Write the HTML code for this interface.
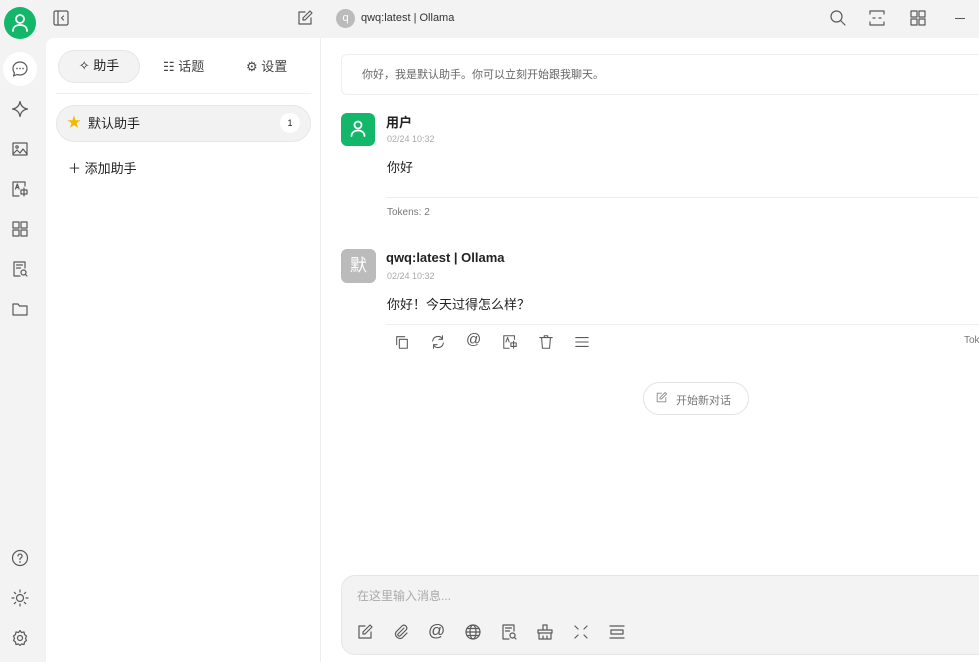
<!DOCTYPE html>
<html><head><meta charset="utf-8"><style>
*{box-sizing:border-box;margin:0;padding:0}
body{width:979px;height:662px;overflow:hidden;background:#f3f3f3;font-family:"Liberation Sans","Noto Sans CJK SC",sans-serif;color:#222;position:relative}
.a{position:absolute}
svg{fill:none;stroke:#5a5a5a;stroke-width:1.2;stroke-linecap:round;stroke-linejoin:round}
.ic{position:absolute;width:18px;height:18px}
</style></head><body>
<!-- left rail -->
<div class="a" style="left:4px;top:7px;width:32px;height:32px;border-radius:50%;background:#12b76a"></div>
<svg class="a" style="left:11px;top:13px;width:18px;height:20px;stroke:#fff;stroke-width:1.8" viewBox="0 0 18 20"><circle cx="9" cy="6" r="4"/><path d="M2 18c0-4 3-6 7-6s7 2 7 6"/></svg>
<div class="a" style="left:3px;top:52px;width:34px;height:34px;border-radius:50%;background:#fff"></div>
<svg class="ic" style="left:11px;top:60px" viewBox="0 0 18 18"><path d="M9 2c4 0 7 3 7 6.5S13 15 9 15c-1 0-2-.2-3-.5L2.5 16l1-3C2.5 11.8 2 10.3 2 8.5 2 5 5 2 9 2z"/><circle cx="6" cy="8.5" r=".3"/><circle cx="9" cy="8.5" r=".3"/><circle cx="12" cy="8.5" r=".3"/></svg>
<svg class="ic" style="left:11px;top:100px" viewBox="0 0 18 18"><path d="M9 1.5c.7 4 2.5 6.8 7.5 7.5-5 .7-6.8 3.5-7.5 7.5C8.3 12.5 6.5 9.7 1.5 9 6.5 8.3 8.3 5.5 9 1.5z"/></svg>
<svg class="ic" style="left:11px;top:140px" viewBox="0 0 18 18"><rect x="2" y="3" width="14" height="12"/><circle cx="6" cy="7" r="1.2"/><path d="M2 14l4-4 3 3 3-4 4 5"/></svg>
<svg class="ic" style="left:11px;top:180px" viewBox="0 0 18 18"><path d="M14 6V2H2v14h6"/><path d="M4.5 9l1.8-5 1.8 5M5 7.5h2.5"/><rect x="10" y="10" width="6" height="4"/><path d="M13 8v8"/></svg>
<svg class="ic" style="left:11px;top:220px" viewBox="0 0 18 18"><rect x="2" y="2" width="6" height="6"/><rect x="10" y="2" width="6" height="6"/><rect x="2" y="10" width="6" height="6"/><rect x="10" y="10" width="6" height="6"/></svg>
<svg class="ic" style="left:11px;top:260px" viewBox="0 0 18 18"><path d="M14 8V2H3v14h6"/><path d="M5.5 5h6M5.5 8h4"/><circle cx="12.5" cy="12.5" r="2.5"/><path d="M14.3 14.3l1.7 1.7"/></svg>
<svg class="ic" style="left:11px;top:300px" viewBox="0 0 18 18"><path d="M2 4h5l1.5 2H16v9H2z"/></svg>
<svg class="ic" style="left:11px;top:549px" viewBox="0 0 18 18"><circle cx="9" cy="9" r="7.5"/><path d="M7 7a2 2 0 1 1 2.5 2c-.5.2-.5.6-.5 1.5"/><circle cx="9" cy="13" r=".3"/></svg>
<svg class="ic" style="left:11px;top:589px" viewBox="0 0 18 18"><circle cx="9" cy="9" r="3.5"/><path d="M9 1v2M9 15v2M1 9h2M15 9h2M3.3 3.3l1.4 1.4M13.3 13.3l1.4 1.4M3.3 14.7l1.4-1.4M13.3 4.7l1.4-1.4"/></svg>
<svg class="ic" style="left:11px;top:629px" viewBox="0 0 18 18"><circle cx="9" cy="9" r="2.5"/><path d="M9 1.5l1.5 2 2.5-.5.5 2.5 2 1.5-1 2.2 1 2.3-2 1.5-.5 2.5-2.5-.5L9 16.5 7.5 15l-2.5.5L4.5 13l-2-1.5 1-2.3-1-2.2 2-1.5L5 3l2.5.5z"/></svg>
<!-- top bar -->
<svg class="ic" style="left:52px;top:9px" viewBox="0 0 18 18"><rect x="2" y="2" width="14" height="14" rx="1.5"/><path d="M6 2v14M11.5 7l-2 2 2 2"/></svg>
<svg class="ic" style="left:296px;top:9px" viewBox="0 0 18 18"><path d="M9 3H3v12h12V9"/><path d="M14 2l2 2-7 7H7V9z"/></svg>
<div class="a" style="left:336px;top:9px;width:19px;height:19px;border-radius:50%;background:#bbb;color:#fff;font-size:11px;text-align:center;line-height:18px">q</div>
<div class="a" style="left:361px;top:12px;font-size:11px;color:#333">qwq:latest | Ollama</div>
<svg class="ic" style="left:829px;top:9px" viewBox="0 0 18 18"><circle cx="7.5" cy="7.5" r="5.5"/><path d="M11.5 11.5l4.5 4.5"/></svg>
<svg class="ic" style="left:868px;top:9px" viewBox="0 0 18 18"><path d="M2 5V2h14v3M2 13v3h14v-3M5 9h2M11 9h2"/></svg>
<svg class="ic" style="left:909px;top:9px" viewBox="0 0 18 18"><rect x="2" y="2" width="6" height="6"/><rect x="10" y="2" width="6" height="6"/><rect x="2" y="10" width="6" height="6"/><rect x="10" y="10" width="6" height="6"/></svg>
<div class="a" style="left:955px;top:18px;width:10px;height:1.3px;background:#555"></div>
<!-- side panel -->
<div class="a" style="left:46px;top:38px;width:275px;height:624px;background:#fff;border-right:1px solid #eee;border-top-left-radius:8px"></div>
<div class="a" style="left:58px;top:50px;width:82px;height:33px;border-radius:17px;background:#f3f3f3;border:1px solid #e6e6e6;font-size:13px;text-align:center;line-height:29px">✧ 助手</div>
<div class="a" style="left:163px;top:56px;font-size:13px;color:#444">☷ 话题</div>
<div class="a" style="left:246px;top:56px;font-size:13px;color:#444">⚙ 设置</div>
<div class="a" style="left:56px;top:93px;width:255px;height:1px;background:#eee"></div>
<div class="a" style="left:56px;top:105px;width:255px;height:37px;border-radius:19px;background:#f2f2f2;border:1px solid #e6e6e6"></div>
<div class="a" style="left:67px;top:112px;font-size:14px;color:#f5b800">★</div>
<div class="a" style="left:88px;top:113px;font-size:13px">默认助手</div>
<div class="a" style="left:280px;top:113px;width:20px;height:20px;border-radius:50%;background:#fff;font-size:9px;text-align:center;line-height:20px">1</div>
<div class="a" style="left:68px;top:158px;font-size:13px">＋ 添加助手</div>
<!-- main -->
<div class="a" style="left:321px;top:38px;width:658px;height:624px;background:#fff"></div>
<div class="a" style="left:341px;top:54px;width:650px;height:41px;border:1px solid #eee;border-radius:6px;font-size:11px;color:#666;padding:11px 0 0 20px">你好，我是默认助手。你可以立刻开始跟我聊天。</div>
<div class="a" style="left:341px;top:113px;width:34px;height:33px;border-radius:6px;background:#12b76a"></div>
<svg class="a" style="left:349px;top:119px;width:18px;height:20px;stroke:#fff;stroke-width:1.8" viewBox="0 0 18 20"><circle cx="9" cy="6" r="3.5"/><path d="M2.5 17c0-3.5 3-5.5 6.5-5.5s6.5 2 6.5 5.5"/></svg>
<div class="a" style="left:386px;top:112px;font-size:13px;font-weight:bold">用户</div>
<div class="a" style="left:387px;top:134px;font-size:9px;color:#aaa">02/24 10:32</div>
<div class="a" style="left:387px;top:157px;font-size:13px">你好</div>
<div class="a" style="left:386px;top:197px;width:593px;height:1px;background:#eee"></div>
<div class="a" style="left:387px;top:207px;font-size:10px;color:#777">Tokens: 2</div>
<div class="a" style="left:341px;top:249px;width:35px;height:34px;border-radius:6px;background:#bbb;color:#fff;font-size:17px;text-align:center;line-height:34px">默</div>
<div class="a" style="left:386px;top:250px;font-size:13px;font-weight:bold">qwq:latest | Ollama</div>
<div class="a" style="left:387px;top:271px;font-size:9px;color:#aaa">02/24 10:32</div>
<div class="a" style="left:387px;top:294px;font-size:13px">你好！今天过得怎么样？</div>
<div class="a" style="left:386px;top:324px;width:593px;height:1px;background:#eee"></div>
<svg class="ic" style="left:394px;top:334px;width:16px;height:16px" viewBox="0 0 18 18"><path d="M3 12V3h9"/><rect x="6" y="6" width="9" height="10"/></svg>
<svg class="ic" style="left:430px;top:334px;width:16px;height:16px" viewBox="0 0 18 18"><path d="M3 8a6 6 0 0 1 11-2.5M15 10a6 6 0 0 1-11 2.5M14 2v4h-4M4 16v-4h4"/></svg>
<div class="a" style="left:466px;top:331px;font-size:15px;color:#555">@</div>
<svg class="ic" style="left:502px;top:334px;width:16px;height:16px" viewBox="0 0 18 18"><path d="M14 6V2H2v14h6"/><path d="M4.5 9l1.8-5 1.8 5"/><rect x="10" y="10" width="6" height="4"/><path d="M13 8v8"/></svg>
<svg class="ic" style="left:538px;top:334px;width:16px;height:16px" viewBox="0 0 18 18"><path d="M2 4h14M7 4V2h4v2M4 4l1 12h8l1-12"/></svg>
<svg class="ic" style="left:574px;top:334px;width:16px;height:16px" viewBox="0 0 18 18"><path d="M2 4h14M2 9h14M2 14h14"/></svg>
<div class="a" style="left:964px;top:335px;font-size:10px;color:#777">Tok</div>
<div class="a" style="left:643px;top:382px;width:106px;height:33px;border-radius:17px;border:1px solid #e3e3e3;font-size:11px;color:#777;padding:9px 0 0 32px">开始新对话</div>
<svg class="a" style="left:655px;top:391px;width:13px;height:13px;stroke:#888" viewBox="0 0 18 18"><path d="M9 3H3v12h12V9"/><path d="M14 2l2 2-7 7H7V9z"/></svg>
<!-- input -->
<div class="a" style="left:341px;top:575px;width:660px;height:80px;border-radius:14px;background:#f3f3f3;border:1px solid #e6e6e6"></div>
<div class="a" style="left:357px;top:587px;font-size:12px;color:#aaa">在这里输入消息...</div>
<svg class="ic" style="left:356px;top:623px" viewBox="0 0 18 18"><path d="M9 3H3v12h12V9"/><path d="M14 2l2 2-7 7H7V9z"/></svg>
<svg class="ic" style="left:392px;top:623px" viewBox="0 0 18 18"><path d="M12 5l-6 6a1.5 1.5 0 0 0 2 2l6.5-6.5a3 3 0 0 0-4-4L4 9a4.5 4.5 0 0 0 6 6l5-5"/></svg>
<div class="a" style="left:428px;top:621px;font-size:17px;color:#555">@</div>
<svg class="ic" style="left:464px;top:623px" viewBox="0 0 18 18"><circle cx="9" cy="9" r="7"/><ellipse cx="9" cy="9" rx="3" ry="7"/><path d="M2 9h14M3 5.5h12M3 12.5h12"/></svg>
<svg class="ic" style="left:500px;top:623px" viewBox="0 0 18 18"><path d="M14 8V2H3v14h6"/><path d="M5.5 5h6M5.5 8h4"/><circle cx="12.5" cy="12.5" r="2.5"/><path d="M14.3 14.3l1.7 1.7"/></svg>
<svg class="ic" style="left:536px;top:623px" viewBox="0 0 18 18"><path d="M7 2h4v5H7zM2 7h14v3H2zM3 10v6h12v-6M7 16v-3M11 16v-3"/></svg>
<svg class="ic" style="left:572px;top:623px" viewBox="0 0 18 18"><path d="M3 3l3 3M15 3l-3 3M3 15l3-3M15 15l-3-3"/></svg>
<svg class="ic" style="left:608px;top:623px" viewBox="0 0 18 18"><path d="M2 3h14M2 15h14"/><rect x="3" y="7" width="12" height="4"/></svg>
</body></html>
